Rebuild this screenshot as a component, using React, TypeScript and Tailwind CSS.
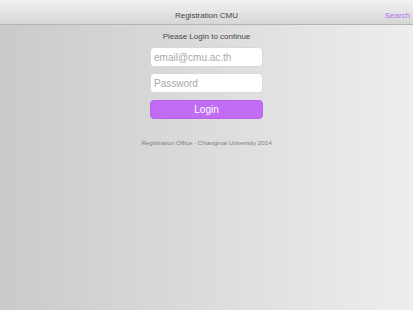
export default function App() {
  return (
    <div
      className="w-[413px] h-[310px] flex flex-col bg-gradient-to-r from-[#cacaca] to-[#eeeeee] text-[#444]"
      style={{ fontFamily: '"Liberation Sans", Arial, sans-serif' }}
    >
      <div className="h-[25px] shrink-0 relative flex items-end justify-center pb-[3px] bg-gradient-to-b from-[#f2f2f2] to-[#d6d6d6] border-b border-[#b4b4b4]">
        <span className="text-[8px] leading-[10px] text-[#444]">Registration CMU</span>
        <span className="absolute right-[3px] bottom-[3px] text-[8px] leading-[10px] text-[#b070f0]">Search</span>
      </div>
      <div className="flex flex-col items-center">
        <p className="mt-[6px] text-[8px] text-[#484848] leading-[11px]">Please Login to continue</p>
        <div className="mt-[5px] w-[113px] h-[20px] bg-white rounded-[4px] border border-[#d8d8d8] flex items-center px-[3px] text-[10px] text-[#a8a8a8]">
          email@cmu.ac.th
        </div>
        <div className="mt-[6px] w-[113px] h-[20px] bg-white rounded-[4px] border border-[#d8d8d8] flex items-center px-[3px] text-[10px] text-[#a8a8a8]">
          Password
        </div>
        <div className="mt-[7px] w-[113px] h-[19px] bg-[#c26cf6] rounded-[4px] border border-[#b862ea] flex items-center justify-center text-[10px] text-white">
          Login
        </div>
        <p className="mt-[19px] text-[6.2px] text-[#808080]">Registration Office - Chiangmai University 2014</p>
      </div>
    </div>
  );
}
